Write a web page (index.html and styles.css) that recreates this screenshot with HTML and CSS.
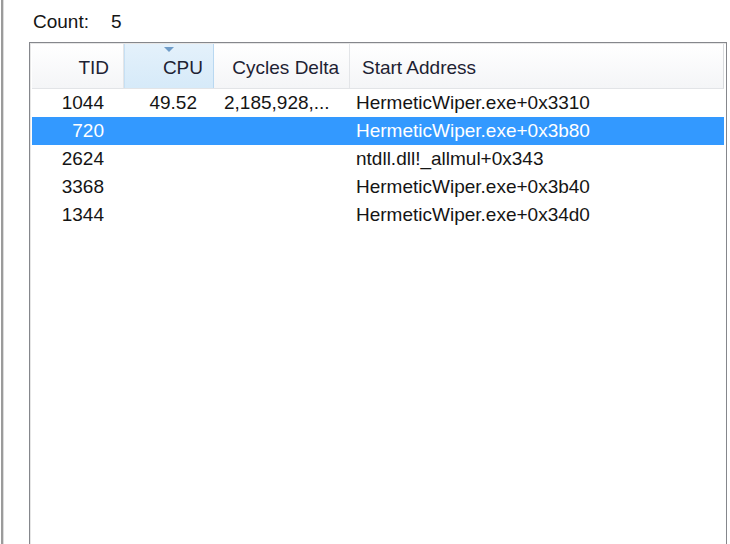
FILE: index.html
```html
<!DOCTYPE html>
<html lang="en">
<head>
    <meta charset="utf-8">
    <title>Threads</title>
    <link rel="stylesheet" href="styles.css">
</head>
<body>
    <div class="frame">
        <div class="count">Count:<span class="countnum">5</span></div>

        <div class="list">
            <div class="head">
                <div class="hc tid">TID</div>
                <div class="hc cpu sorted">CPU<span class="arrow"></span></div>
                <div class="hc cyc">Cycles Delta</div>
                <div class="hc addr">Start Address</div>
            </div>

            <div class="row">
                <div class="c tid">1044</div>
                <div class="c cpu">49.52</div>
                <div class="c cyc">2,185,928,...</div>
                <div class="c addr">HermeticWiper.exe+0x3310</div>
            </div>
            <div class="row sel">
                <div class="c tid">720</div>
                <div class="c cpu"></div>
                <div class="c cyc"></div>
                <div class="c addr">HermeticWiper.exe+0x3b80</div>
            </div>
            <div class="row">
                <div class="c tid">2624</div>
                <div class="c cpu"></div>
                <div class="c cyc"></div>
                <div class="c addr">ntdll.dll!_allmul+0x343</div>
            </div>
            <div class="row">
                <div class="c tid">3368</div>
                <div class="c cpu"></div>
                <div class="c cyc"></div>
                <div class="c addr">HermeticWiper.exe+0x3b40</div>
            </div>
            <div class="row">
                <div class="c tid">1344</div>
                <div class="c cpu"></div>
                <div class="c cyc"></div>
                <div class="c addr">HermeticWiper.exe+0x34d0</div>
            </div>
        </div>
    </div>
</body>
</html>
```

FILE: styles.css
```css
body {
    margin: 0;
    width: 730px;
    height: 544px;
    overflow: hidden;
    background: #fff;
    font-family: "Liberation Sans", Arial, sans-serif;
    font-size: 19px;
    color: #151515;
}
.frame {
    margin-left: 1px;
    height: 544px;
    border-left: 2px solid #9b9b9b;
    box-shadow: inset 1px 0 0 #dcdcdc;
}
.count {
    height: 30px;
    padding: 12px 0 0 30px;
    line-height: 20px;
    box-sizing: content-box;
}
.countnum {
    margin-left: 22px;
}
.list {
    margin-left: 26px;
    width: 698px;
    height: 520px;
    box-sizing: border-box;
    border: 1px solid #85878c;
    box-shadow: inset 1px 1px 0 #e6e6e6;
    padding: 1px 2px 0 2px;
}
.head,
.row {
    display: grid;
    grid-template-columns: 92px 90px 136px 1fr;
}
.head {
    height: 44px;
    background: linear-gradient(#ffffff, #f4f5f7);
    border-bottom: 1px solid #e2e4e7;
    border-right: 1px solid #d9dbde;
    color: #1d2233;
}
.hc {
    display: flex;
    align-items: center;
    padding-top: 4px;
    border-right: 1px solid #e3e5e8;
    position: relative;
}
.hc.tid { justify-content: flex-end; padding-right: 14px; }
.hc.cpu { justify-content: flex-end; padding-right: 10px; }
.hc.cyc { justify-content: flex-end; padding-right: 10px; }
.hc.addr { padding-left: 12px; border-right: none; }
.sorted {
    background: linear-gradient(#e4f1fb, #d6eaf9);
    border-left: 1px solid #c6e0f4;
    border-right: 1px solid #b9d8f1;
}
.arrow {
    position: absolute;
    top: 3px;
    left: 50%;
    margin-left: -5px;
    width: 0;
    height: 0;
    border-left: 5px solid transparent;
    border-right: 5px solid transparent;
    border-top: 5px solid #6f9cc8;
}
.row {
    height: 28px;
    line-height: 28px;
}
.c {
    white-space: nowrap;
    overflow: hidden;
}
.c.tid { text-align: right; padding-right: 20px; }
.c.cpu { text-align: right; padding-right: 17px; }
.c.cyc { padding-left: 10px; }
.c.addr { padding-left: 6px; }
.row.sel {
    background: #3399ff;
    color: #fff;
}
```
